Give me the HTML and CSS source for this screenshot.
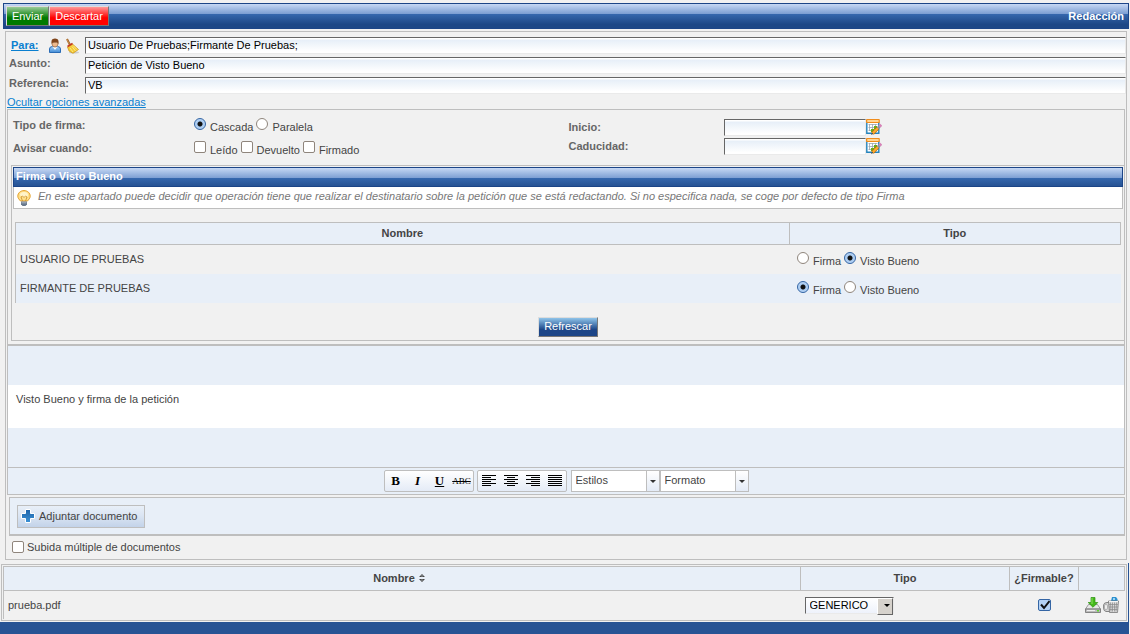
FILE: index.html
```html
<!DOCTYPE html>
<html lang="es">
<head>
<meta charset="utf-8">
<title>Redacción</title>
<link rel="stylesheet" href="styles.css">
</head>
<body>
<svg class="defs" aria-hidden="true">
  <defs>
    <linearGradient id="plus" x2="0" y2="1"><stop stop-color="#1c62a8"/><stop offset="1" stop-color="#3c92d6"/></linearGradient>
    <linearGradient id="shirt" x2="0" y2="1"><stop stop-color="#a9d3f6"/><stop offset="1" stop-color="#3f8ad6"/></linearGradient>
    <symbol id="calendar" viewBox="0 0 16 16">
      <path fill="#fff" stroke="#2584bd" stroke-width="1.4" d="M.8 3v11.200h12V3"/>
      <path fill="#ffc36e" stroke="#f08c1c" d="M.5.5h12.800v3H.5z"/>
      <path stroke="#ffe8bd" d="M2 2h10"/>
      <path fill="none" stroke="#9aa7b1" stroke-width=".8" d="M2.500 5.500h9M2.500 8.500h9M2.500 11.500h6M3.500 5v7M6.500 5v7M9.500 5v6"/>
      <path fill="#67ad16" d="M8 7h3v3H8zM5 10h3v3H5z"/>
      <path stroke="#b76b10" stroke-width="3.400" d="M6.500 14.500l5.500-5.500"/>
      <path stroke="#ffad30" stroke-width="2" d="M6.800 14.200L12 9"/>
      <path stroke="#8893a0" stroke-width="3" d="M12 9l1.500-1.500"/>
      <path stroke="#d783b8" stroke-width="3" d="M13.500 7.500l1.800-1.800"/>
      <path fill="#333" d="M5 16l1-2 1 1z"/>
    </symbol>
  </defs>
</svg>

<header class="topbar">
  <div class="actions">
    <button class="btn btn-send" type="button">Enviar</button>
    <button class="btn btn-discard" type="button">Descartar</button>
  </div>
  <h1 class="title">Redacción</h1>
</header>

<main class="compose">
  <div class="field">
    <div class="field-label to-label">
      <a class="link bold" href="#para">Para:</a>
      <svg class="icon icon-user" viewBox="0 0 12 16" aria-hidden="true">
        <path fill="url(#shirt)" stroke="#2b6cb5" d="M.5 14.500V11q0-2.500 3-2.500h5q3 0 3 2.500v3.500z"/>
        <path fill="#fff" d="M3.500 8.500h5L6 12z"/>
        <path fill="#efb98b" stroke="#8a5528" stroke-width=".7" d="M3 4.500Q3 9 6 9t3-4.500z"/>
        <path fill="#80451b" d="M2.500 6V3Q3 .5 6 .5T9.500 3v3L8 4H5L3 5z"/>
      </svg>
      <svg class="icon icon-broom" viewBox="0 0 14 16" aria-hidden="true">
        <ellipse cx="9" cy="14.500" rx="5" ry="1" fill="#ccc"/>
        <path stroke="#9b6028" stroke-width="2" d="M2 1l3 6"/>
        <path stroke="#d59a55" stroke-width=".8" d="M1.700 1l3 6"/>
        <path fill="#f4c934" stroke="#c89318" stroke-width=".7" d="M2.500 9L7.500 6l6 5.500L8 15.300l-4-2.300z"/>
        <path stroke="#c43b20" stroke-width="1.500" d="M2.500 8.500L7.500 5.500"/>
        <path fill="none" stroke="#fff09a" stroke-width=".8" d="M5 10l3 4M7 8.500l3.500 4.500M8 7.500l4 4"/>
      </svg>
    </div>
    <input class="text" id="para" type="text" aria-label="Para" value="Usuario De Pruebas;Firmante De Pruebas;">
  </div>
  <div class="field">
    <label class="field-label bold" for="asunto">Asunto:</label>
    <input class="text" id="asunto" type="text" value="Petición de Visto Bueno">
  </div>
  <div class="field">
    <label class="field-label bold" for="ref">Referencia:</label>
    <input class="text" id="ref" type="text" value="VB">
  </div>
  <div class="toggle"><a class="link" href="#avanzadas">Ocultar opciones avanzadas</a></div>

  <section class="advanced" id="avanzadas">
    <div class="options">
      <div class="options-left">
        <div class="option-row" role="radiogroup" aria-labelledby="tf">
          <span class="bold" id="tf">Tipo de firma:</span>
          <div class="choices">
            <input class="radio" type="radio" name="firma" id="cascada" checked><label for="cascada">Cascada</label>
            <input class="radio" type="radio" name="firma" id="paralela"><label for="paralela">Paralela</label>
          </div>
        </div>
        <div class="option-row" role="group" aria-labelledby="ac">
          <span class="bold" id="ac">Avisar cuando:</span>
          <div class="choices">
            <input class="check" type="checkbox" id="leido"><label for="leido">Leído</label>
            <input class="check" type="checkbox" id="devuelto"><label for="devuelto">Devuelto</label>
            <input class="check" type="checkbox" id="firmado"><label for="firmado">Firmado</label>
          </div>
        </div>
      </div>
      <div class="options-right">
        <div class="date-row">
          <label class="bold" for="inicio">Inicio:</label>
          <div class="date"><input class="text" id="inicio" type="text"><button class="icon-btn" type="button" aria-label="Elegir inicio"><svg class="icon-16" aria-hidden="true"><use href="#calendar"/></svg></button></div>
        </div>
        <div class="date-row">
          <label class="bold" for="caducidad">Caducidad:</label>
          <div class="date"><input class="text" id="caducidad" type="text"><button class="icon-btn" type="button" aria-label="Elegir caducidad"><svg class="icon-16" aria-hidden="true"><use href="#calendar"/></svg></button></div>
        </div>
      </div>
    </div>

    <section class="sign">
      <h2 class="sign-title">Firma o Visto Bueno</h2>
      <div class="hint">
        <svg class="icon-bulb" viewBox="0 0 14 16" aria-hidden="true">
          <path fill="#ffe08a" stroke="#e3a02c" d="M7 .6C3.300.6.8 3.200.8 6.200c0 2 1.500 3.300 2.700 4.800h7c1.200-1.500 2.700-2.800 2.700-4.800C13.200 3.200 10.700.6 7 .6z"/>
          <path fill="#fff4ca" d="M3 5q0-3 4-3t4 3-4 2-4-2z"/>
          <path fill="none" stroke="#c98f28" stroke-width=".8" d="M5.500 11L4 7l1.500-1L7 7.500 8.500 6 10 7l-1.500 4"/>
          <path fill="#68788c" d="M4 11.500h6v2.700L8.500 16h-3L4 14.200z"/>
          <path stroke="#c7d0da" stroke-width=".7" d="M4.500 12.800h5"/>
        </svg>
        <p class="hint-text">En este apartado puede decidir que operación tiene que realizar el destinatario sobre la petición que se está redactando. Si no especifica nada, se coge por defecto de tipo Firma</p>
      </div>
      <table class="grid signers">
        <colgroup><col class="col-name"><col></colgroup>
        <thead><tr><th>Nombre</th><th>Tipo</th></tr></thead>
        <tbody>
          <tr>
            <td>USUARIO DE PRUEBAS</td>
            <td><div class="choices">
              <input class="radio" type="radio" name="u1" id="u1f"><label for="u1f">Firma</label>
              <input class="radio" type="radio" name="u1" id="u1v" checked><label for="u1v">Visto Bueno</label>
            </div></td>
          </tr>
          <tr>
            <td>FIRMANTE DE PRUEBAS</td>
            <td><div class="choices">
              <input class="radio" type="radio" name="u2" id="u2f" checked><label for="u2f">Firma</label>
              <input class="radio" type="radio" name="u2" id="u2v"><label for="u2v">Visto Bueno</label>
            </div></td>
          </tr>
        </tbody>
      </table>
      <div class="refresh"><button class="btn btn-refresh" type="button">Refrescar</button></div>
    </section>
  </section>

  <section class="editor">
    <textarea class="message" aria-label="Mensaje">Visto Bueno y firma de la petición</textarea>
    <div class="tools">
      <div class="group">
        <button class="tool tool-b" type="button">B</button>
        <button class="tool tool-i" type="button">I</button>
        <button class="tool tool-u" type="button">U</button>
        <button class="tool tool-s" type="button">ABC</button>
      </div>
      <div class="group">
        <button class="tool" type="button" aria-label="Izquierda"><svg class="align" viewBox="0 0 14 12"><path d="M0 .5h14M0 2.500h9M0 4.500h14M0 6.500h9M0 8.500h14M0 10.500h9"/></svg></button>
        <button class="tool" type="button" aria-label="Centro"><svg class="align" viewBox="0 0 14 12"><path d="M0 .5h14M3 2.500h8M0 4.500h14M3 6.500h8M0 8.500h14M3 10.500h8"/></svg></button>
        <button class="tool" type="button" aria-label="Derecha"><svg class="align" viewBox="0 0 14 12"><path d="M0 .5h14M5 2.500h9M0 4.500h14M5 6.500h9M0 8.500h14M5 10.500h9"/></svg></button>
        <button class="tool" type="button" aria-label="Justificar"><svg class="align" viewBox="0 0 14 12"><path d="M0 .5h14M0 2.500h14M0 4.500h14M0 6.500h14M0 8.500h14M0 10.500h14"/></svg></button>
      </div>
      <div class="combos">
        <div class="combo"><select class="combo-select" aria-label="Estilos"><option>Estilos</option></select></div>
        <div class="combo"><select class="combo-select" aria-label="Formato"><option>Formato</option></select></div>
      </div>
    </div>
  </section>

  <section class="attach">
    <button class="btn-attach" type="button">
      <svg class="icon-plus" viewBox="0 0 14 14" aria-hidden="true"><path fill="url(#plus)" stroke="#fff" d="M4.500.5h5v4h4v5h-4v4h-5v-4h-4v-5h4z"/></svg>
      <span>Adjuntar documento</span>
    </button>
  </section>
  <div class="multi"><input class="check" type="checkbox" id="multi"><label for="multi">Subida múltiple de documentos</label></div>
</main>

<section class="files">
  <div class="files-box">
    <table class="grid docs">
      <colgroup><col><col class="col-type"><col class="col-sign"><col class="col-acts"></colgroup>
      <thead><tr>
        <th class="name-head">Nombre <svg class="sort" viewBox="0 0 6 8" aria-hidden="true"><path fill="#444" d="M0 3l3-3 3 3zM0 5h6L3 8z"/><path fill="#e8eff8" d="M2 2.300l1-1 1 1zM2 5.700h2l-1 1z"/></svg></th>
        <th>Tipo</th><th class="tight">¿Firmable?</th><th></th>
      </tr></thead>
      <tbody><tr>
        <td>prueba.pdf</td>
        <td><div class="type"><select class="type-select" aria-label="Tipo"><option>GENERICO</option></select></div></td>
        <td><input class="check check-mark" type="checkbox" aria-label="Firmable" checked></td>
        <td><div class="row-acts">
          <button class="icon-btn" type="button" aria-label="Descargar"><svg class="icon-16" viewBox="0 0 16 16" aria-hidden="true">
            <path fill="#e8e8e8" stroke="#888" stroke-width=".8" d="M3.500 7.500h9l3 4.500H.5z"/>
            <path fill="#bbb" stroke="#6d6d6d" stroke-width=".8" d="M.5 12h15v3.500H.5z"/>
            <path stroke="#eee" d="M2 13.500h8"/><path fill="#5bd52c" d="M12 13h2v1.500h-2z"/>
            <path fill="#45b91b" stroke="#2d9110" stroke-width=".7" d="M6 .5h4v5h2.800L8 10.300 3.200 5.500H6z"/>
            <path stroke="#8de360" d="M7 1v6"/>
          </svg></button>
          <button class="icon-btn" type="button" aria-label="Eliminar"><svg class="icon-16" viewBox="0 0 16 16" aria-hidden="true">
            <path fill="#d9d9d9" stroke="#777" stroke-width=".9" d="M.6 8Q1 5.500 4 5.500h3v9H3Q.5 14 .6 11z"/>
            <ellipse cx="3" cy="10" rx="1.500" ry="3" fill="#f5f5f5" stroke="#888" stroke-width=".6"/>
            <path fill="#2d91cf" d="M8 4l1-4h4l1.500 2v2z"/><path fill="#9bd3f2" d="M10 1h2v2h-2z"/>
            <path fill="#dcdcdc" stroke="#777" stroke-width=".8" d="M5.500 4h10l-1 11.500h-8z"/>
            <path stroke="#888" stroke-width=".7" d="M7.500 5.500l.5 9M9.500 5.500v9M11.500 5.500v9M13.500 5.500l-.5 9M6 7.500h9M6 10h9M6.500 12.500h8"/>
            <path stroke="#f5f5f5" d="M6 4.500h9"/>
          </svg></button>
        </div></td>
      </tr></tbody>
    </table>
  </div>
</section>
<footer class="footer"></footer>
</body>
</html>
```
FILE: styles.css
```css
* { box-sizing: border-box; }

body {
  margin: 0;
  min-height: 100vh;
  display: flex;
  flex-direction: column;
  background: #f1f1f1;
  color: #444;
  font: 11px/13px "Liberation Sans", Arial, sans-serif;
}

button, input, select, textarea { font: inherit; margin: 0; border-radius: 0; }
h1, h2, p { margin: 0; font-size: 11px; }
.defs { position: absolute; width: 0; height: 0; }
.bold { font-weight: bold; color: #666; }
.link, .link.bold { color: #0a7fd0; text-decoration: underline; }

.topbar {
  display: flex;
  align-items: center;
  justify-content: space-between;
  height: 26px;
  margin: 3px 1px 0 3px;
  padding: 0 4px 0 2px;
  border: 1px solid #1c4587;
  background: linear-gradient(#c6d8f4, #7d9fd3 40%, #3668ae 41%, #1d4786 85%);
}
.title { color: #fff; }
.actions { display: flex; }

.btn {
  padding: 0 5px;
  height: 20px;
  border: 1px solid;
  border-color: #ddd #777 #777 #ddd;
  color: #fff;
}
.btn-send { background: linear-gradient(#9c9, #007a00 60%); }
.btn-discard { background: linear-gradient(#f99, #f00 60%); }
.btn-refresh { background: linear-gradient(#8fc4ea, #1c4587 65%); }

.compose {
  margin: 2px 3px 0 5px;
  padding: 5px 0 5px 1px;
  border: 1px solid #bebebe;
}
.field { display: flex; height: 17px; margin-bottom: 3px; }
.field-label { flex: 0 0 78px; padding-left: 2px; line-height: 13px; }
.to-label { display: flex; align-items: center; padding-left: 4px; }
.icon { flex: none; height: 16px; }
.icon-user { width: 12px; margin-left: 10px; }
.icon-broom { width: 14px; margin-left: 4px; }

.text {
  flex: 1;
  min-width: 0;
  height: 17px;
  padding: 0 2px 1px;
  border: 1px solid;
  border-color: #666 #eaeaea #eaeaea #666;
  background: linear-gradient(#fff 1px, #e7eff8 2px, #fff 90%);
  color: #000;
}
.toggle { height: 13px; margin-top: -1px; line-height: 12px; }

.advanced { margin-right: 1px; padding: 0 0 3px 3px; border: solid #bebebe; border-width: 1px 1px 2px; }
.options { display: flex; height: 55px; padding-left: 2px; }
.options-left { flex: 1; padding-top: 7px; }
.options-right { flex: 1; padding-top: 8px; }
.option-row { display: flex; height: 23px; }
.option-row > .bold { flex: 0 0 181px; padding-top: 2px; }
.choices { display: flex; align-items: flex-start; }
.choices label { margin: 4px 3px 0 4px; }

.radio, .check {
  appearance: none;
  flex: none;
  width: 12px;
  height: 12px;
  margin-top: 1px;
  border: 1px solid #8f857c;
  background: #fff;
}
.check { border-radius: 2px; }
.radio { border-radius: 50%; }
.radio:checked {
  border-color: #3465a4;
  background: radial-gradient(circle, #111 0 2px, #a9cbf2 3px, #c4dcf7);
}
.date-row { display: flex; height: 19px; align-items: center; }
.date-row > .bold { flex: 0 0 155px; }
.date { display: flex; }
.date .text { flex: none; width: 142px; }
.icon-btn { display: flex; padding: 0; border: 0; background: none; }
.icon-16 { width: 16px; height: 16px; }

.sign { padding: 1px; border: solid #bebebe; border-width: 1px 0 1px 1px; }
.sign-title {
  height: 20px;
  padding-left: 2px;
  border: 1px solid #1c4587;
  background: linear-gradient(#c6d8f4, #7d9fd3 55%, #3668ae 56%, #275394);
  color: #fff;
  line-height: 17px;
}
.hint { display: flex; align-items: center; height: 22px; padding-left: 3px; border: solid #bebebe; border-width: 0 1px 1px; background: #fff; }
.icon-bulb { width: 14px; height: 16px; }
.hint-text { padding: 0 0 2px 7px; color: #777; font-style: italic; }

.grid { border-collapse: collapse; table-layout: fixed; width: 100%; }
.grid th { padding: 0; border: 1px solid #bebebe; background: #e8eff8; }
.grid td { padding: 0 4px; }
.signers { width: auto; min-width: calc(100% - 4px); margin: 13px 2px 0; border-left: 1px solid #bebebe; }
.signers th { height: 22px; }
.signers td { height: 29px; }
.signers td .choices { padding-left: 4px; height: 17px; }
.signers tr:nth-child(2) td { background: #e8eff8; }
.col-name { width: 70%; }
.refresh { display: flex; justify-content: center; padding: 14px 0 2px; }

.editor { margin-right: 1px; padding-top: 39px; border: solid #bebebe; border-width: 0 1px 1px; background: #e8eff8; }
.message {
  display: block;
  width: 100%;
  height: 43px;
  padding: 8px;
  border: 0;
  resize: none;
  background: #fff;
  color: #444;
}
.tools { display: flex; justify-content: center; gap: 3px; height: 27px; margin-top: 39px; padding-top: 2px; border-top: 1px solid #bebebe; }
.group { display: flex; height: 22px; border: 1px solid #bebebe; border-radius: 2px; background: linear-gradient(#fff, #e4ebf6); }
.tool { width: 22px; padding: 0; border: 0; background: none; color: #000; font: bold 13px/18px "Liberation Serif", serif; }
.tool-i { font-style: italic; }
.tool-u { text-decoration: underline; }
.tool-s { font: 9px/18px "Liberation Serif", serif; text-decoration: line-through; }
.align { display: block; width: 14px; height: 12px; margin: auto; stroke: #000; shape-rendering: crispEdges; }
.combos { display: flex; padding-left: 1px; }
.combo, .type { position: relative; display: flex; width: 89px; }
.combo { height: 22px; }
.combo::after, .type::after {
  content: "";
  position: absolute;
  right: 4px;
  top: 10px;
  border: solid transparent;
  border-width: 3px 3px 0;
  border-top-color: #333;
  pointer-events: none;
}
.combo-select, .type-select { appearance: none; width: 100%; padding: 0 4px; }
.combo-select { border: 1px solid #bebebe; background: linear-gradient(#bebebe, #bebebe) right 12px top / 1px 100% no-repeat, linear-gradient(#fff, #e4ebf6) right / 12px 100% no-repeat, #fff; color: #444; }

.attach { margin: 2px 1px 0 2px; padding: 7px 7px 6px; border: solid #bebebe; border-width: 1px 1px 2px; background: #e8eff8; }
.btn-attach { display: flex; align-items: center; gap: 4px; height: 23px; padding: 0 7px 0 3px; border: 1px solid #bebebe; background: linear-gradient(#e8eff8, #dbe5f3 45%, #c3d3e9); color: #444; }
.icon-plus { width: 14px; height: 14px; }
.multi { display: flex; align-items: center; gap: 3px; height: 18px; padding: 5px 0 0 5px; }
.multi .check { margin: 0; }

.files { margin: 3px 1px 0; padding: 1px 1px 1px 0; border-right: 1px solid #275394; }
.files-box { padding: 1px; border: 1px solid #bebebe; }
.docs { border-left: 1px solid #bebebe; }
.docs th { height: 24px; }
.docs .name-head { padding-right: 6px; }
.docs td { height: 29px; padding-top: 1px; }
.docs .tight { white-space: nowrap; }
.col-type { width: 209px; }
.col-sign { width: 69px; }
.col-acts { width: 46px; }
.sort { width: 6px; height: 8px; margin-left: 1px; }
.type-select {
  height: 17px;
  border: 1px solid;
  border-color: #666 #eaeaea #eaeaea #666;
  background: linear-gradient(#fff, #eef2fb);
  color: #000;
}
.type::before {
  content: "";
  position: absolute;
  right: 1px;
  top: 1px;
  width: 14px;
  height: 15px;
  border: 1px solid;
  border-color: #fff #666 #666 #fff;
  background: #d6d2cc;
  pointer-events: none;
}
.type::after { top: 7px; border-top-color: #000; }
.check-mark {
  display: block;
  width: 13px;
  margin: 0 auto;
  border-color: #3465a4;
  background: #b5d2f4 url("data:image/svg+xml,%3Csvg xmlns='http://www.w3.org/2000/svg' viewBox='0 0 11 10'%3E%3Cpath d='M2 4.500l3 3.500L10.500 1' fill='none' stroke='%23111' stroke-width='2'/%3E%3C/svg%3E") center / 11px 10px;
}
.row-acts { display: flex; gap: 2px; padding-left: 2px; }
.footer { flex: 1; min-height: 12px; background: #275394; margin-right: 1px; }
```
